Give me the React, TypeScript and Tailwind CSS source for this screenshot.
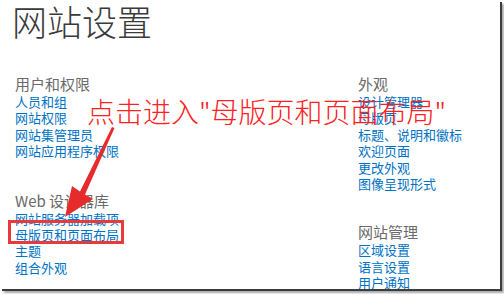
const links1 = ['人员和组', '网站权限', '网站集管理员', '网站应用程序权限'];
const links2 = ['网站服务器加载项', '母版页和页面布局', '主题', '组合外观'];
const links3 = ['设计管理器', '母版页', '标题、说明和徽标', '欢迎页面', '更改外观', '图像呈现形式'];
const links4 = ['区域设置', '语言设置', '用户通知'];

function Section({ title, links, className = '' }: { title: string; links: string[]; className?: string }) {
  return (
    <div className={className}>
      <div className="text-[15px] leading-[20px] text-[#6a6a6a]">{title}</div>
      <ul>
        {links.map((l) => (
          <li key={l} className="text-[13px] leading-[16.4px] text-[#0072c6]">
            {l}
          </li>
        ))}
      </ul>
    </div>
  );
}

export default function App() {
  return (
    <div className="w-[504px] h-[294px] bg-white overflow-hidden">
      <div
        className="relative w-[500px] h-[289px] bg-white overflow-hidden shadow-[2px_2px_0_#3c3c3c,4px_4px_2px_#a8a8a8] pl-[12px]"
        style={{ fontFamily: '"Noto Sans CJK SC", sans-serif' }}
      >
        {/* Title */}
        <h1 className="text-[35px] leading-[42px] font-extralight text-[#3a3a3a]">网站设置</h1>

        {/* Columns */}
        <div className="mt-[32px] pl-[3px] grid grid-cols-[343px_1fr]">
          <div>
            <Section title="用户和权限" links={links1} />
            <Section title="Web 设计器库" links={links2} className="mt-[31px]" />
          </div>
          <div>
            <Section title="外观" links={links3} />
            <Section title="网站管理" links={links4} className="mt-[30px]" />
          </div>
        </div>

        {/* Annotation */}
        <div className="absolute left-[87px] top-[97px] text-[28px] leading-[28px] font-extralight text-[#ff2020] whitespace-nowrap">
          点击进入"母版页和页面布局"
        </div>
        <svg className="absolute left-0 top-0" width="500" height="289" viewBox="0 0 500 289">
          <polygon points="112,127 114.5,128 85,194.5 93,199 65,217 72,186 80,191.5" fill="#e52b2b" />
        </svg>
        <div className="absolute left-[8px] top-[220px] w-[116px] h-[24px] border-[3px] border-[#e8393c]" />
      </div>
    </div>
  );
}
